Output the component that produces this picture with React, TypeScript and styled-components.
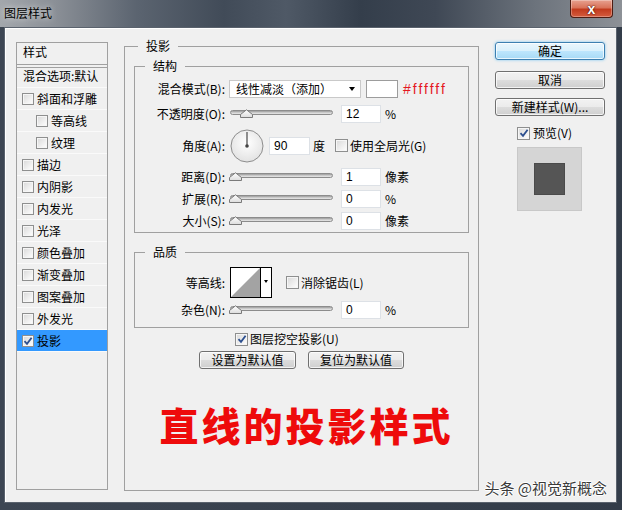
import styled, { createGlobalStyle } from "styled-components";

const GlobalStyle = createGlobalStyle`
  html, body {
    margin: 0;
    padding: 0;
    background: #323b48;
  }
  body {
    font-family: "Noto Sans CJK SC", "Microsoft YaHei", sans-serif;
    font-size: 12px;
    color: #000;
  }
  * {
    box-sizing: border-box;
  }
`;

const Window = styled.div`
  width: 622px;
  height: 510px;
  display: flex;
  flex-direction: column;
  background: #343d4a;
`;

const TitleBar = styled.div`
  height: 27px;
  flex: none;
  display: flex;
  justify-content: space-between;
  align-items: flex-start;
  padding: 0 9px 0 4px;
  background: linear-gradient(90deg, #a3a7ac 0%, #8a8f96 9%, #5b6470 22%, #414b58 36%, #4f5966 46%, #343e4b 58%, #3f4855 70%, #6c737c 86%, #8d9197 100%);
`;

const Title = styled.span`
  margin-top: 5px;
  line-height: 16px;
  color: #000;
  text-shadow: 0 0 6px rgba(255, 255, 255, 0.8);
`;

const CloseButton = styled.div`
  width: 43px;
  height: 18px;
  border: 1px solid #4d1c12;
  border-top: none;
  border-radius: 0 0 4px 4px;
  background: linear-gradient(180deg, #e7a190 0%, #d9735a 45%, #c23b1e 55%, #d55c3e 100%);
  box-shadow: inset 0 0 0 1px rgba(255, 255, 255, 0.3);
  display: flex;
  align-items: center;
  justify-content: center;
  color: #fff;
  font: bold 14px/14px "Liberation Sans", sans-serif;
  text-shadow: 0 0 2px #4a0e04, 0 0 1px #4a0e04;
`;

const Frame = styled.div`
  flex: 1;
  display: flex;
  padding: 0 5px 7px 4px;
  background: linear-gradient(90deg, #3d4653 0%, #333c49 100%);
`;

const Content = styled.div`
  flex: 1;
  position: relative;
  display: flex;
  align-items: flex-start;
  padding: 10px 11px 0 11px;
  background: #f0f0f0;
  border: 1px solid #5a626d;
  box-shadow: inset 1px 1px 0 #fff;
`;

/* left list */

const StyleList = styled.div`
  width: 92px;
  height: 448px;
  margin-top: 4px;
  flex: none;
  border: 1px solid #a0a0a0;
  display: flex;
  flex-direction: column;
`;

const ListHeader = styled.div`
  height: 22px;
  padding: 1px 0 0 6px;
  line-height: 16px;
  border-bottom: 1px solid #a0a0a0;
`;

const ListBlend = styled.div`
  height: 21px;
  margin-top: 2px;
  padding-left: 6px;
  line-height: 16px;
  border-top: 1px solid #a0a0a0;
  border-bottom: 1px solid #fafafa;
`;

const ListItem = styled.div<{ $indent?: boolean; $active?: boolean }>`
  height: 22px;
  display: flex;
  align-items: center;
  gap: 3px;
  padding-left: ${(p) => (p.$indent ? 19 : 5)}px;
  line-height: 16px;
  border-bottom: 1px solid #fafafa;
  background: ${(p) => (p.$active ? "#3399ff" : "transparent")};
`;

/* checkbox */

const Box = styled.span<{ $size?: number }>`
  width: ${(p) => p.$size ?? 13}px;
  height: ${(p) => p.$size ?? 13}px;
  flex: none;
  display: inline-flex;
  align-items: center;
  justify-content: center;
  border: 1px solid #8e8f8f;
  background: linear-gradient(135deg, #d8d8d8 0%, #f4f4f4 70%, #fff 100%);
  box-shadow: inset 0 0 0 1px #f6f6f6;
`;

const Check = ({ on, size }: { on?: boolean; size?: number }) => (
  <Box $size={size}>
    {on && (
      <svg width="10" height="10" viewBox="0 0 10 10">
        <path d="M1.5 5.2 L4 7.8 L8.6 1.8" fill="none" stroke="#2c4f8f" strokeWidth="1.8" />
      </svg>
    )}
  </Box>
);

/* group boxes */

const Group = styled.fieldset<{ $w?: number; $h?: number; $pad?: string; $mt?: number }>`
  margin: ${(p) => p.$mt ?? 0}px 0 0 0;
  padding: ${(p) => p.$pad ?? "0"};
  border: 1px solid #a0a0a0;
  min-width: 0;
  width: ${(p) => (p.$w ? `${p.$w}px` : "auto")};
  height: ${(p) => (p.$h ? `${p.$h}px` : "auto")};
  flex: none;
  display: flex;
  flex-direction: column;
`;

const Legend = styled.legend<{ $ml: number }>`
  padding: 0 8px;
  margin-left: ${(p) => p.$ml}px;
  line-height: 16px;
`;

const MainGroup = styled(Group)`
  margin-left: 16px;
`;

const Row = styled.div<{ $h?: number; $mt?: number; $ml?: number }>`
  display: flex;
  align-items: center;
  height: ${(p) => p.$h ?? 22}px;
  margin-top: ${(p) => p.$mt ?? 0}px;
  margin-left: ${(p) => p.$ml ?? 0}px;
  flex: none;
`;

const Label = styled.span`
  width: 90px;
  flex: none;
  text-align: right;
  margin-right: 4px;
  line-height: 16px;
  white-space: nowrap;
`;

const Select = styled.div`
  width: 132px;
  height: 18px;
  background: #fff;
  border: 1px solid #c9c9c9;
  display: flex;
  align-items: center;
  justify-content: space-between;
  padding: 0 5px 0 6px;
  line-height: 16px;
`;

const Arrow = styled.span`
  width: 0;
  height: 0;
  border-left: 3.5px solid transparent;
  border-right: 3.5px solid transparent;
  border-top: 4px solid #000;
`;

const Swatch = styled.div`
  width: 32px;
  height: 18px;
  margin-left: 5px;
  background: #fff;
  border: 1px solid #9c9c9c;
`;

const HexText = styled.span`
  margin-left: 5px;
  color: #e5171f;
  font: 14px/16px "Liberation Sans", sans-serif;
  letter-spacing: 2px;
`;

const SliderWrap = styled.div`
  position: relative;
  width: 108px;
  height: 22px;
  flex: none;
`;

const Track = styled.div`
  position: absolute;
  left: 1px;
  right: 4px;
  top: 7px;
  height: 5px;
  border-radius: 3px;
  border: 1px solid #8c8c8c;
  background: linear-gradient(180deg, #9a9a9a 0%, #c9c9c9 50%, #e8e8e8 100%);
`;

const ThumbSvg = styled.svg`
  position: absolute;
  top: 6px;
`;

const Slider = ({ value }: { value: number }) => (
  <SliderWrap>
    <Track />
    <ThumbSvg width="13" height="9" viewBox="0 0 13 9" style={{ left: Math.round((value / 100) * 91) }}>
      <defs>
        <linearGradient id="thumbFill" x1="0" y1="0" x2="0" y2="1">
          <stop offset="0" stopColor="#ffffff" />
          <stop offset="1" stopColor="#dcdcdc" />
        </linearGradient>
      </defs>
      <path d="M0.5 8.5 L0.5 5.5 L6.5 0.8 L12.5 5.5 L12.5 8.5 Z" fill="url(#thumbFill)" stroke="#7a7a7a" strokeWidth="1" />
    </ThumbSvg>
  </SliderWrap>
);

const NumberBox = styled.div<{ $ml?: number; $w?: number }>`
  width: ${(p) => p.$w ?? 40}px;
  height: 18px;
  flex: none;
  margin-left: ${(p) => p.$ml ?? 4}px;
  background: #fff;
  border: 1px solid #dde1e6;
  padding-left: 4px;
  font: 12px/16px "Liberation Sans", sans-serif;
`;

const Unit = styled.span<{ $ml?: number }>`
  margin-left: ${(p) => p.$ml ?? 4}px;
  line-height: 16px;
  white-space: nowrap;
`;

const CheckLabel = styled.span`
  margin-left: 2px;
  line-height: 16px;
  white-space: nowrap;
`;

const Dial = () => (
  <svg width="34" height="34" viewBox="0 0 34 34" style={{ marginLeft: 1, flex: "none" }}>
    <defs>
      <radialGradient id="dialFill" cx="0.5" cy="0.4" r="0.6">
        <stop offset="0" stopColor="#ffffff" />
        <stop offset="1" stopColor="#e2e2e2" />
      </radialGradient>
    </defs>
    <circle cx="17" cy="17" r="16" fill="url(#dialFill)" stroke="#8d8d8d" strokeWidth="1" />
    <line x1="17" y1="17" x2="17" y2="3" stroke="#555" strokeWidth="1.3" />
    <circle cx="17" cy="17" r="1.8" fill="#444" />
  </svg>
);

const ContourBox = styled.div`
  display: flex;
  height: 31px;
  margin-left: 1px;
  border: 1px solid #000;
  background: #fff;
`;

const ContourDrop = styled.div`
  width: 11px;
  border-left: 1px solid #000;
  display: flex;
  justify-content: center;
  padding-top: 12px;
`;

const SmallArrow = styled.span`
  width: 0;
  height: 0;
  border-left: 2.5px solid transparent;
  border-right: 2.5px solid transparent;
  border-top: 3px solid #000;
`;

const ButtonRow = styled.div`
  display: flex;
  justify-content: center;
  gap: 12px;
  margin-top: 3px;
`;

const Button = styled.div<{ $w?: number; $primary?: boolean; $mt?: number }>`
  width: ${(p) => (p.$w ? `${p.$w}px` : "100%")};
  height: 18px;
  margin-top: ${(p) => p.$mt ?? 0}px;
  flex: none;
  display: flex;
  align-items: center;
  justify-content: center;
  line-height: 16px;
  border-radius: 3px;
  border: 1px solid ${(p) => (p.$primary ? "#3c7fb1" : "#707070")};
  background: ${(p) =>
    p.$primary
      ? "linear-gradient(180deg, #eaf6fd 0%, #d9f0fc 50%, #bee6fd 50%, #a7d9f5 100%)"
      : "linear-gradient(180deg, #f2f2f2 0%, #ebebeb 50%, #dddddd 50%, #cfcfcf 100%)"};
  box-shadow: inset 0 0 0 1px rgba(255, 255, 255, 0.75)
    ${(p) => (p.$primary ? ", 0 0 3px #79c7f2" : "")};
`;

const BigText = styled.div`
  margin-top: 33px;
  text-align: center;
  color: #ee0b0b;
  font-family: "Noto Sans CJK SC", sans-serif;
  font-weight: 900;
  font-size: 39px;
  line-height: 44px;
  letter-spacing: 3px;
  padding-left: 10px;
`;

/* right column */

const Side = styled.div`
  width: 110px;
  flex: none;
  margin: 4px 0 0 16px;
  display: flex;
  flex-direction: column;
`;

const PreviewToggle = styled.div`
  display: flex;
  align-items: center;
  gap: 3px;
  height: 16px;
  margin: 9px 0 0 22px;
  line-height: 16px;
`;

const PreviewBox = styled.div`
  width: 65px;
  height: 64px;
  margin: 6px 0 0 22px;
  background: #d5d5d5;
  border: 1px solid #c8c8c8;
  display: flex;
  align-items: center;
  justify-content: center;
`;

const PreviewSquare = styled.div`
  width: 31px;
  height: 32px;
  background: #555;
  border: 1px solid #4a4a4a;
`;

const Watermark = styled.div`
  position: absolute;
  right: 9px;
  bottom: 6px;
  font-size: 15px;
  line-height: 16px;
  color: #3a3a3a;
  text-shadow: 1px 0 0 #fff, -1px 0 0 #fff, 0 1px 0 #fff, 0 -1px 0 #fff;
`;

const effects: { name: string; indent?: boolean; on?: boolean }[] = [
  { name: "斜面和浮雕" },
  { name: "等高线", indent: true },
  { name: "纹理", indent: true },
  { name: "描边" },
  { name: "内阴影" },
  { name: "内发光" },
  { name: "光泽" },
  { name: "颜色叠加" },
  { name: "渐变叠加" },
  { name: "图案叠加" },
  { name: "外发光" },
  { name: "投影", on: true },
];

const App = () => {
  return (
    <>
      <GlobalStyle />
      <Window>
        <TitleBar>
          <Title>图层样式</Title>
          <CloseButton>x</CloseButton>
        </TitleBar>
        <Frame>
          <Content>
            <StyleList>
              <ListHeader>样式</ListHeader>
              <ListBlend>混合选项:默认</ListBlend>
              {effects.map((e) => (
                <ListItem key={e.name} $indent={e.indent} $active={e.on}>
                  <Check on={e.on} size={12} />
                  <span>{e.name}</span>
                </ListItem>
              ))}
            </StyleList>

            <MainGroup $w={355} $h={453} $pad="0 9px">
              <Legend $ml={4}>投影</Legend>

              <Group $mt={4}>
                <Legend $ml={10}>结构</Legend>
                <Row $mt={4}>
                  <Label>混合模式(B):</Label>
                  <Select>
                    <span>线性减淡（添加）</span>
                    <Arrow />
                  </Select>
                  <Swatch />
                  <HexText>#ffffff</HexText>
                </Row>
                <Row $mt={3}>
                  <Label>不透明度(O):</Label>
                  <Slider value={12} />
                  <NumberBox>12</NumberBox>
                  <Unit>%</Unit>
                </Row>
                <Row $mt={3} $h={35}>
                  <Label>角度(A):</Label>
                  <Dial />
                  <NumberBox $ml={5} $w={41}>90</NumberBox>
                  <Unit $ml={3}>度</Unit>
                  <Unit $ml={10}>
                    <Row $h={16}>
                      <Check />
                      <CheckLabel>使用全局光(G)</CheckLabel>
                    </Row>
                  </Unit>
                </Row>
                <Row $mt={3}>
                  <Label>距离(D):</Label>
                  <Slider value={0} />
                  <NumberBox>1</NumberBox>
                  <Unit>像素</Unit>
                </Row>
                <Row>
                  <Label>扩展(R):</Label>
                  <Slider value={0} />
                  <NumberBox>0</NumberBox>
                  <Unit>%</Unit>
                </Row>
                <Row>
                  <Label>大小(S):</Label>
                  <Slider value={0} />
                  <NumberBox>0</NumberBox>
                  <Unit>像素</Unit>
                </Row>
              </Group>

              <Group $mt={11} $pad="0 0 6px 0">
                <Legend $ml={10}>品质</Legend>
                <Row $mt={7} $h={31}>
                  <Label>等高线:</Label>
                  <ContourBox>
                    <svg width="29" height="29" viewBox="0 0 29 29">
                      <polygon points="0,29 29,0 29,29" fill="#a3a3a3" />
                    </svg>
                    <ContourDrop>
                      <SmallArrow />
                    </ContourDrop>
                  </ContourBox>
                  <Unit $ml={14}>
                    <Row $h={16}>
                      <Check />
                      <CheckLabel>消除锯齿(L)</CheckLabel>
                    </Row>
                  </Unit>
                </Row>
                <Row $mt={1}>
                  <Label>杂色(N):</Label>
                  <Slider value={0} />
                  <NumberBox>0</NumberBox>
                  <Unit>%</Unit>
                </Row>
              </Group>

              <Row $mt={2} $h={18} $ml={101}>
                <Check on />
                <CheckLabel>图层挖空投影(U)</CheckLabel>
              </Row>
              <ButtonRow>
                <Button $w={97}>设置为默认值</Button>
                <Button $w={96}>复位为默认值</Button>
              </ButtonRow>

              <BigText>直线的投影样式</BigText>
            </MainGroup>

            <Side>
              <Button $primary>确定</Button>
              <Button $mt={11}>取消</Button>
              <Button $mt={9}>新建样式(W)...</Button>
              <PreviewToggle>
                <Check on />
                <span>预览(V)</span>
              </PreviewToggle>
              <PreviewBox>
                <PreviewSquare />
              </PreviewBox>
            </Side>

            <Watermark>头条 @视觉新概念</Watermark>
          </Content>
        </Frame>
      </Window>
    </>
  );
};

export default App;
